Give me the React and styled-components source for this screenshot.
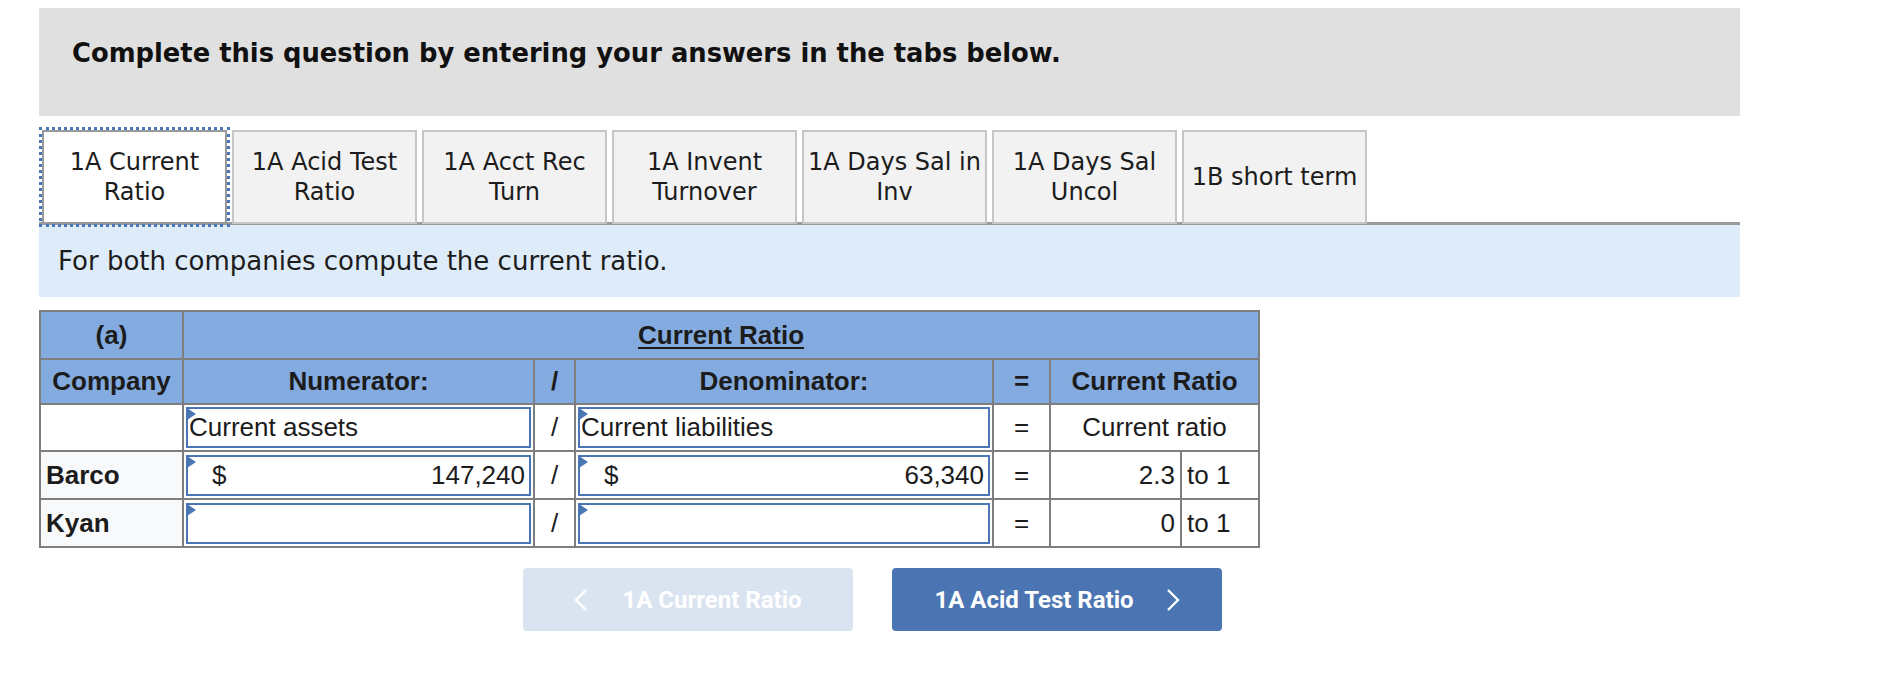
import React from 'react'
import styled, { createGlobalStyle } from 'styled-components'

const GlobalStyle = createGlobalStyle`
  html, body {
    margin: 0;
    padding: 0;
    background: #fff;
  }
  body {
    font-family: "DejaVu Sans", Verdana, sans-serif;
    color: #1c1c1c;
  }
`

const Page = styled.div`
  width: 1701px;
  padding: 8px 0 40px 39px;
`

const Banner = styled.div`
  height: 108px;
  box-sizing: border-box;
  background: #e0e0e0;
  padding: 30px 0 0 33px;
  font-size: 25.8px;
  line-height: 30px;
  font-weight: bold;
  color: #111;
`

const TabStrip = styled.div`
  display: flex;
  gap: 5px;
  margin-top: 14px;
  padding-left: 3px;
  border-bottom: 3px solid #9b9b9b;
`

const Tab = styled.div`
  width: 185px;
  height: 94px;
  box-sizing: border-box;
  margin-bottom: -2px;
  display: flex;
  align-items: center;
  justify-content: center;
  text-align: center;
  font-size: 24px;
  line-height: 30px;
  color: #1c1c1c;
  background: ${p => (p.$active ? '#fff' : '#f2f2f2')};
  border: 2px solid ${p => (p.$active ? '#999' : '#c6c6c6')};
  outline: ${p => (p.$active ? '3px dotted #4a76b6' : 'none')};
  outline-offset: 0px;
  position: relative;
  z-index: ${p => (p.$active ? 1 : 0)};
`

const Instruction = styled.div`
  height: 72px;
  box-sizing: border-box;
  background: #deebf8;
  display: flex;
  align-items: center;
  padding-left: 19px;
  font-size: 26px;
  color: #1c1c1c;
`

const Grid = styled.table`
  margin-top: 13px;
  border-collapse: collapse;
  table-layout: fixed;
  width: 1219px;
  font-family: "Liberation Sans", Arial, sans-serif;
  font-size: 26px;
  color: #1c1c1c;
  border: 2px solid #7e7e7e;
`

const Row = styled.tr`
  height: ${p => p.$h || 47}px;
`

const Head = styled.th`
  background: #84abe0;
  border: 2px solid #7e7e7e;
  font-weight: bold;
  text-align: center;
  padding: 0 4px;
  white-space: nowrap;
  text-decoration: ${p => (p.$underline ? 'underline' : 'none')};
  text-underline-offset: 3px;
`

const Cell = styled.td`
  border: 2px solid #7e7e7e;
  padding: ${p => (p.$input ? '2px' : '0 5px')};
  text-align: ${p => p.$align || 'center'};
  background: ${p => (p.$shade ? '#f8f9fb' : '#fff')};
  font-weight: ${p => (p.$bold ? 'bold' : 'normal')};
  white-space: nowrap;
`

const Field = styled.div`
  position: relative;
  height: 41px;
  box-sizing: border-box;
  border: 2px solid #4a76b6;
  background: #fff;
  display: flex;
  align-items: center;
  justify-content: space-between;
  padding: 0 4px 0 ${p => (p.$money ? '24px' : '1px')};

  &::before {
    content: '';
    position: absolute;
    left: -1px;
    top: -1px;
    border-top: 6px solid transparent;
    border-bottom: 6px solid transparent;
    border-left: 9px solid #4a76b6;
  }
`

const Nav = styled.div`
  display: flex;
  gap: 39px;
  margin-top: 20px;
  padding-left: 484px;
`

const NavButton = styled.button`
  width: 330px;
  height: 63px;
  border: none;
  border-radius: 4px;
  background: ${p => (p.$disabled ? '#dae4f0' : '#4a74b2')};
  color: #fff;
  font-family: Roboto, "Liberation Sans", sans-serif;
  font-weight: bold;
  font-size: 24px;
  display: flex;
  align-items: center;
  justify-content: center;
  gap: ${p => (p.$disabled ? '34px' : '32px')};
  cursor: ${p => (p.$disabled ? 'default' : 'pointer')};
`

const Chevron = ({ dir }) => (
  <svg width="14" height="24" viewBox="0 0 14 24">
    <polyline
      points={dir === 'left' ? '12,2 2,12 12,22' : '2,2 12,12 2,22'}
      fill="none"
      stroke="#fff"
      strokeWidth="2.4"
    />
  </svg>
)

const tabs = [
  ['1A Current', 'Ratio'],
  ['1A Acid Test', 'Ratio'],
  ['1A Acct Rec', 'Turn'],
  ['1A Invent', 'Turnover'],
  ['1A Days Sal in', 'Inv'],
  ['1A Days Sal', 'Uncol'],
  ['1B short term'],
]

const rows = [
  { name: 'Barco', num: '147,240', den: '63,340', ratio: '2.3' },
  { name: 'Kyan', num: '', den: '', ratio: '0' },
]

export default function App() {
  return (
    <>
      <GlobalStyle />
      <Page>
        <Banner>Complete this question by entering your answers in the tabs below.</Banner>

        <TabStrip>
          {tabs.map((t, i) => (
            <Tab key={i} $active={i === 0}>
              <div>
                {t.map((line, j) => (
                  <div key={j}>{line}</div>
                ))}
              </div>
            </Tab>
          ))}
        </TabStrip>

        <Instruction>For both companies compute the current ratio.</Instruction>

        <Grid>
          <colgroup>
            <col style={{ width: 143 }} />
            <col style={{ width: 351 }} />
            <col style={{ width: 41 }} />
            <col style={{ width: 418 }} />
            <col style={{ width: 57 }} />
            <col style={{ width: 131 }} />
            <col style={{ width: 78 }} />
          </colgroup>
          <thead>
            <Row $h={48}>
              <Head>(a)</Head>
              <Head colSpan={6} $underline>Current Ratio</Head>
            </Row>
            <Row $h={45}>
              <Head>Company</Head>
              <Head>Numerator:</Head>
              <Head>/</Head>
              <Head>Denominator:</Head>
              <Head>=</Head>
              <Head colSpan={2}>Current Ratio</Head>
            </Row>
          </thead>
          <tbody>
            <Row $h={46}>
              <Cell />
              <Cell $input>
                <Field>Current assets</Field>
              </Cell>
              <Cell>/</Cell>
              <Cell $input>
                <Field>Current liabilities</Field>
              </Cell>
              <Cell>=</Cell>
              <Cell colSpan={2}>Current ratio</Cell>
            </Row>
            {rows.map(r => (
              <Row key={r.name} $h={48}>
                <Cell $align="left" $shade $bold>{r.name}</Cell>
                <Cell $input>
                  <Field $money={!!r.num}>
                    <span>{r.num ? '$' : ''}</span>
                    <span>{r.num}</span>
                  </Field>
                </Cell>
                <Cell>/</Cell>
                <Cell $input>
                  <Field $money={!!r.den}>
                    <span>{r.den ? '$' : ''}</span>
                    <span>{r.den}</span>
                  </Field>
                </Cell>
                <Cell>=</Cell>
                <Cell $align="right">{r.ratio}</Cell>
                <Cell $align="left">to 1</Cell>
              </Row>
            ))}
          </tbody>
        </Grid>

        <Nav>
          <NavButton $disabled>
            <Chevron dir="left" />
            <span>1A Current Ratio</span>
          </NavButton>
          <NavButton>
            <span>1A Acid Test Ratio</span>
            <Chevron dir="right" />
          </NavButton>
        </Nav>
      </Page>
    </>
  )
}
